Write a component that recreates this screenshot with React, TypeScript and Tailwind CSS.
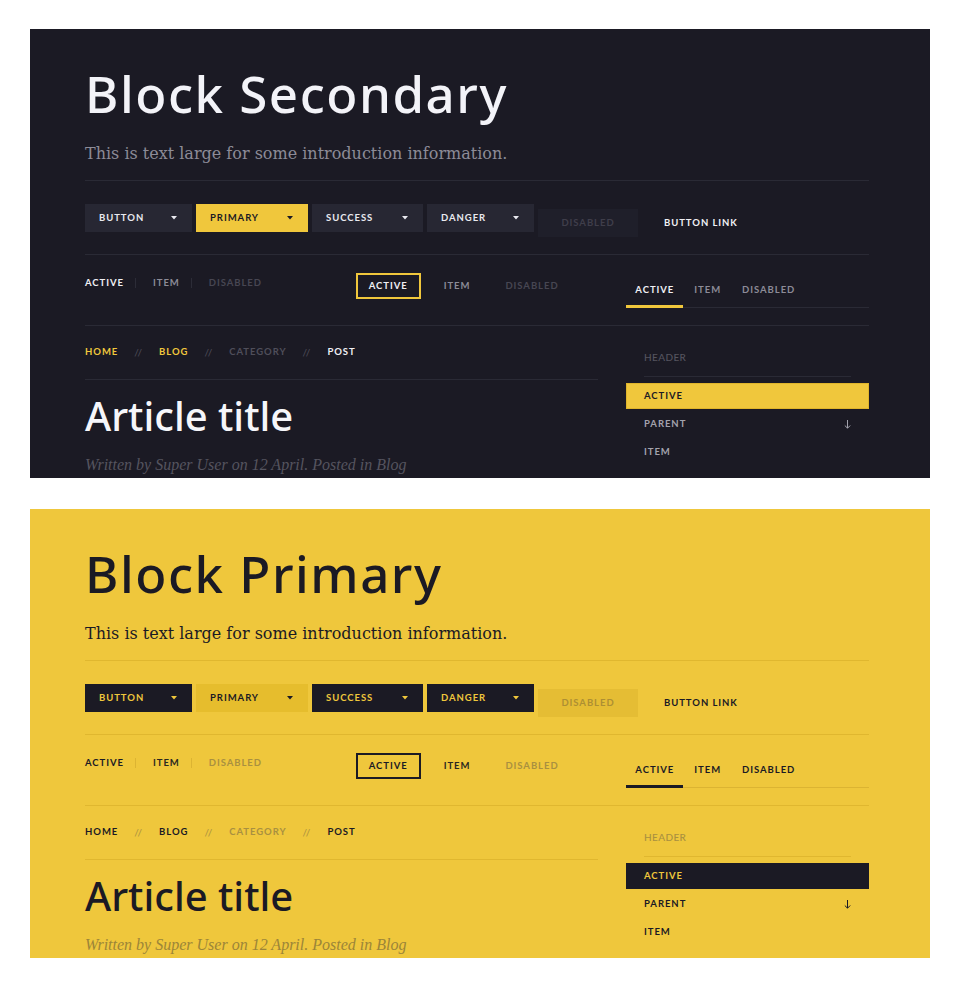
import React from 'react';

type Variant = 'dark' | 'yellow';

const themes = {
  dark: {
    bg: 'bg-[#1b1a24]',
    heading: 'text-[#f3f3f8]',
    lead: 'text-[#8c8b97]',
    hr: 'border-[#2a2a35]',
    btn: 'bg-[#272733] text-[#e9e9ef]',
    btnPrimary: 'bg-[#f0c73c] text-[#1b1a24]',
    disabled: 'bg-[#1f1f2a] text-[#3f3e4a]',
    link: 'text-[#f0f0f5]',
    navActive: 'text-[#f0f0f5]',
    navItem: 'text-[#8c8b97]',
    navDisabled: 'text-[#474652]',
    navSep: 'bg-[#2c2c37]',
    box: 'border-[#f0c73c] text-[#f0f0f5]',
    tabActive: 'text-[#f0f0f5] border-[#f0c73c]',
    tabItem: 'text-[#8c8b97] border-transparent',
    tabLine: 'border-[#2a2a35]',
    crumbLink: 'text-[#f0c73c]',
    crumbMuted: 'text-[#4f4e5a]',
    crumbCurrent: 'text-[#f0f0f5]',
    title: 'text-[#f6f6fa]',
    byline: 'text-[#55545f]',
    sideHeader: 'text-[#55545f]',
    sideActive: 'bg-[#f0c73c] text-[#1b1a24] border-[#e0b52c]',
    sideItem: 'text-[#a3a2ad]',
  },
  yellow: {
    bg: 'bg-[#efc73c]',
    heading: 'text-[#1b1a24]',
    lead: 'text-[#1b1a24]',
    hr: 'border-[#e0b72f]',
    btn: 'bg-[#1b1a24] text-[#efc73c]',
    btnPrimary: 'bg-[#e6bd2d] text-[#1b1a24]',
    disabled: 'bg-[#e5bd34] text-[#ad8f33]',
    link: 'text-[#1b1a24]',
    navActive: 'text-[#1b1a24]',
    navItem: 'text-[#2b2720]',
    navDisabled: 'text-[#a99040]',
    navSep: 'bg-[#dcb432]',
    box: 'border-[#1b1a24] text-[#1b1a24]',
    tabActive: 'text-[#1b1a24] border-[#1b1a24]',
    tabItem: 'text-[#1b1a24] border-transparent',
    tabLine: 'border-[#dcb432]',
    crumbLink: 'text-[#1b1a24]',
    crumbMuted: 'text-[#a99040]',
    crumbCurrent: 'text-[#1b1a24]',
    title: 'text-[#1b1a24]',
    byline: 'text-[#9c8538]',
    sideHeader: 'text-[#a99040]',
    sideActive: 'bg-[#1b1a24] text-[#efc73c] border-[#1b1a24]',
    sideItem: 'text-[#1b1a24]',
  },
};

const sans = "font-['Noto_Sans',sans-serif]";
const label = "font-['Lato',sans-serif] font-bold text-[9.5px] leading-[12px] uppercase tracking-[0.1em]";
const serif = "font-['DejaVu_Serif',serif]";
const italicSerif = "font-['Liberation_Serif',serif]";

const Caret = () => (
  <svg width="6" height="4" viewBox="0 0 6 4" className="fill-current">
    <path d="M0 0h6L3 3.5z" />
  </svg>
);

const DropButton = ({ text, cls }: { text: string; cls: string }) => (
  <div className={`flex h-[28px] items-center justify-between pl-[14px] pr-[15px] ${cls}`}>
    <span className={label}>{text}</span>
    <Caret />
  </div>
);

const Crumb = ({ cls }: { cls: string }) => (
  <span className={`mx-[16px] font-['Lato',sans-serif] text-[10px] leading-[12px] tracking-[0.1em] ${cls}`}>//</span>
);

const Block = ({ variant, title }: { variant: Variant; title: string }) => {
  const t = themes[variant];

  return (
    <section className={`h-[449px] w-[900px] overflow-hidden ${t.bg}`}>
      <div className="ml-[55px] w-[784px]">
        <h1 className={`${sans} pt-[39px] text-[51px] leading-none font-medium tracking-[0.03em] ${t.heading}`}>
          {title}
        </h1>
        <p className={`${serif} mt-[23px] text-[16px] leading-[24px] ${t.lead}`}>
          This is text large for some introduction information.
        </p>

        <hr className={`mt-[14px] ${t.hr}`} />

        {/* buttons */}
        <div className="mt-[23px] flex h-[28px] items-start">
          <div className="flex gap-[4px]">
            <DropButton text="Button" cls={`w-[107px] ${t.btn}`} />
            <DropButton text="Primary" cls={`w-[112px] ${t.btnPrimary}`} />
            <DropButton text="Success" cls={`w-[111px] ${t.btn}`} />
            <DropButton text="Danger" cls={`w-[107px] ${t.btn}`} />
          </div>
          <div className={`mt-[5px] ml-[4px] flex h-[28px] w-[100px] shrink-0 items-center justify-center ${t.disabled}`}>
            <span className={label}>Disabled</span>
          </div>
          <div className={`mt-[5px] ml-[26px] flex h-[28px] items-center ${t.link}`}>
            <span className={label}>Button link</span>
          </div>
        </div>

        <hr className={`mt-[22px] ${t.hr}`} />

        {/* navs */}
        <div className="grid h-[70px] grid-cols-3 gap-[28px]">
          <div className="flex items-center self-start pt-[22px]">
            <span className={`${label} ${t.navActive}`}>Active</span>
            <span className={`mr-[17px] ml-[11px] h-[10px] w-px ${t.navSep}`} />
            <span className={`${label} ${t.navItem}`}>Item</span>
            <span className={`mr-[17px] ml-[11px] h-[10px] w-px ${t.navSep}`} />
            <span className={`${label} ${t.navDisabled}`}>Disabled</span>
          </div>
          <div className="flex items-center gap-[23px] self-start pt-[18px]">
            <span className={`flex h-[26px] items-center border-2 px-[11px] ${label} ${t.box}`}>Active</span>
            <span className={`${label} ${t.navItem}`}>Item</span>
            <span className={`ml-[12px] ${label} ${t.navDisabled}`}>Disabled</span>
          </div>
          <div className="self-start pt-[29px]">
            <div className={`flex gap-[1px] border-b ${t.tabLine}`}>
              <span className={`-mb-px border-b-[3px] px-[9px] pb-[9px] ${label} ${t.tabActive}`}>Active</span>
              <span className={`-mb-px border-b-[3px] px-[10px] pb-[9px] ${label} ${t.tabItem}`}>Item</span>
              <span className={`-mb-px border-b-[3px] px-[10px] pb-[9px] ${label} ${t.tabItem}`}>Disabled</span>
            </div>
          </div>
        </div>

        <hr className={t.hr} />

        {/* article + sidebar */}
        <div className="grid grid-cols-[513px_243px] gap-[28px]">
          <div>
            <div className="flex items-center pt-[20px]">
              <span className={`${label} ${t.crumbLink}`}>Home</span>
              <Crumb cls={t.crumbMuted} />
              <span className={`${label} ${t.crumbLink}`}>Blog</span>
              <Crumb cls={t.crumbMuted} />
              <span className={`${label} ${t.crumbMuted}`}>Category</span>
              <Crumb cls={t.crumbMuted} />
              <span className={`${label} ${t.crumbCurrent}`}>Post</span>
            </div>
            <hr className={`mt-[21px] ${t.hr}`} />
            <h2 className={`${sans} mt-[16px] text-[40px] leading-none font-medium ${t.title}`}>Article title</h2>
            <p className={`${italicSerif} mt-[19px] text-[16px] leading-[20px] italic ${t.byline}`}>
              Written by Super User on 12 April. Posted in Blog
            </p>
          </div>

          <nav>
            <div className="px-[18px]">
              <div
                className={`border-b pt-[25px] pb-[13px] font-['Lato',sans-serif] text-[10px] leading-[12px] font-medium tracking-[0.04em] uppercase ${t.hr} ${t.sideHeader}`}
              >
                Header
              </div>
            </div>
            <ul className="mt-[6px] flex flex-col gap-[2px]">
              <li className={`flex h-[26px] items-center border px-[17px] ${label} ${t.sideActive}`}>Active</li>
              <li className={`flex h-[26px] items-center justify-between px-[18px] ${label} ${t.sideItem}`}>
                Parent
                <svg width="7" height="9" viewBox="0 0 7 9" className="stroke-current" fill="none" strokeWidth="1">
                  <path d="M3.5 0v8M0.8 5.5l2.7 2.7 2.7-2.7" />
                </svg>
              </li>
              <li className={`flex h-[26px] items-center px-[18px] ${label} ${t.sideItem}`}>Item</li>
            </ul>
          </nav>
        </div>
      </div>
    </section>
  );
}

export default function App() {
  return (
    <div className="flex min-h-[989px] flex-col gap-[31px] bg-white pt-[29px] pl-[30px]">
      <Block variant="dark" title="Block Secondary" />
      <Block variant="yellow" title="Block Primary" />
    </div>
  );
}
